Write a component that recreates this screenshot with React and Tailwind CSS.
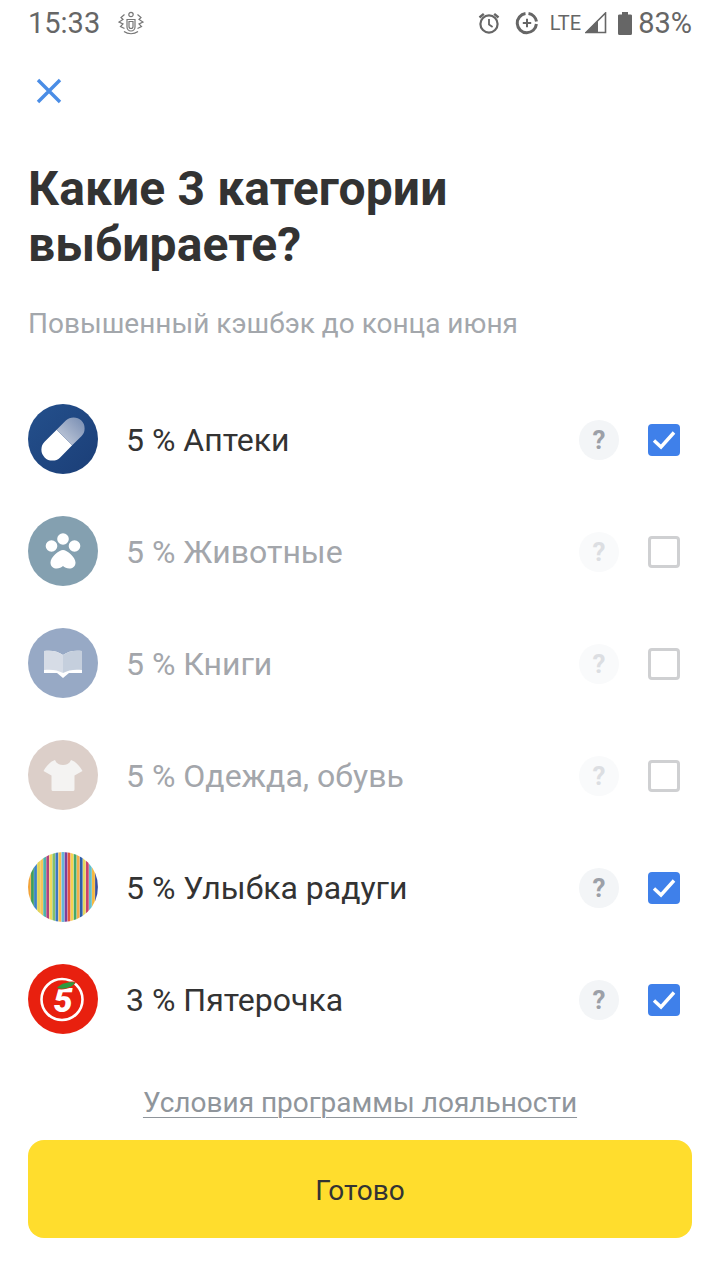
import React from "react";

const font = { fontFamily: "Roboto, sans-serif" };

function Alarm() {
  return (
    <svg width="24" height="24" viewBox="0 0 24 24" fill="none" stroke="#666" strokeWidth="2.2">
      <circle cx="12" cy="13" r="8.6" />
      <path d="M12 8v5.500l3.600 2.400" strokeWidth="1.800" />
      <path d="M2.500 6.500 6.800 2.800M21.500 6.500l-4.300-3.700" strokeWidth="2.400" />
    </svg>
  );
}
function DataSaver() {
  return (
    <svg width="24" height="24" viewBox="0 0 24 24" fill="none" stroke="#666">
      <path d="M10.500 2.600A9.600 9.600 0 1 0 21.400 13" strokeWidth="3" />
      <path d="M13.500 2.600a9.600 9.600 0 0 1 8 8" strokeWidth="3" />
      <path d="M12 7.800v8.400M7.800 12h8.400" strokeWidth="2" />
    </svg>
  );
}
function Signal() {
  return (
    <svg width="22" height="22" viewBox="0 0 22 22">
      <path d="M1 20.500 20.500 1v19.500z" fill="none" stroke="#666" strokeWidth="1.600" />
      <path d="M1 20.500 13 8.500v12z" fill="#666" />
    </svg>
  );
}
function Battery() {
  return (
    <svg width="14" height="23" viewBox="0 0 14 23">
      <path d="M4 0h6v2.400h2.500A1.500 1.500 0 0 1 14 4v17.500a1.500 1.500 0 0 1-1.500 1.500h-11A1.500 1.500 0 0 1 0 21.500V4a1.500 1.500 0 0 1 1.500-1.600H4z" fill="#666" />
    </svg>
  );
}
function Crest() {
  return (
    <svg width="26" height="24" viewBox="0 0 26 24" fill="none" stroke="#777" strokeWidth="1.200">
      <circle cx="13" cy="3.500" r="2.200" />
      <path d="M9 8.500h8v7.500a4 4 0 0 1-8 0z" />
      <path d="M11 10.500h4v5a2 2 0 0 1-4 0z" />
      <path d="M6.500 3.500 3 6.500l2 2-4 2.500 4 2-2.500 2.500 4 2" />
      <path d="M19.500 3.500l3.500 3-2 2 4 2.500-4 2 2.500 2.500-4 2" />
      <path d="M6 20.500c4 3 10 3 14 0" />
    </svg>
  );
}

function Pill() {
  return (
    <svg width="70" height="70" viewBox="0 0 70 70">
      <defs>
        <linearGradient id="pillbg" x1="0" y1="0" x2="1" y2="1">
          <stop offset="0" stopColor="#24508c" />
          <stop offset="1" stopColor="#1b3e77" />
        </linearGradient>
        <linearGradient id="pilltop" x1="0" y1="0" x2="1" y2="0">
          <stop offset="0" stopColor="#b4bfd3" />
          <stop offset="1" stopColor="#7f93b6" />
        </linearGradient>
      </defs>
      <circle cx="35" cy="35" r="35" fill="url(#pillbg)" />
      <g transform="rotate(-45 35 35)">
        <path d="M37 24H20a11 11 0 0 0 0 22h17z" fill="#fff" />
        <path d="M37 24h13a11 11 0 0 1 0 22H37z" fill="url(#pilltop)" />
      </g>
    </svg>
  );
}
function Paw() {
  return (
    <svg width="70" height="70" viewBox="0 0 70 70">
      <circle cx="35" cy="35" r="35" fill="#84a0b0" />
      <g fill="#fff">
        <circle cx="23.500" cy="30" r="5.800" />
        <circle cx="35" cy="23" r="5.800" />
        <circle cx="46.500" cy="30" r="5.800" />
        <path d="M35 34c4 0 12.500 7 12.500 12.500 0 4-3 6-6.200 6-2.500 0-4.800-1-6.300-2.500-1.500 1.500-3.800 2.500-6.300 2.500-3.200 0-6.200-2-6.200-6C22.500 41 31 34 35 34z" />
      </g>
    </svg>
  );
}
function Book() {
  return (
    <svg width="70" height="70" viewBox="0 0 70 70">
      <circle cx="35" cy="35" r="35" fill="#97a9c5" />
      <path d="M16 23c7-1 14 0 19 4 5-4 12-5 19-4v22H41l-6 5-6-5H16z" fill="#fff" />
      <path d="M16 23c7-1 14 0 19 4v18c-5-3-12-4-19-3z" fill="#d6dce6" />
      <path d="M54 23c-7-1-14 0-19 4v18c5-3 12-4 19-3z" fill="#c5cfdd" />
    </svg>
  );
}
function Shirt() {
  return (
    <svg width="70" height="70" viewBox="0 0 70 70">
      <circle cx="35" cy="35" r="35" fill="#dccfc9" />
      <path d="M27 20c1.500 3.500 4 5 8 5s6.500-1.500 8-5c4.500 1.500 8 5 11.500 11l-8 4.500V49.500a1.500 1.500 0 0 1-1.500 1.500H25a1.500 1.500 0 0 1-1.500-1.500V35.500l-8-4.500C19 25 22.500 21.500 27 20z" fill="#f4f3f2" />
    </svg>
  );
}
function Rainbow() {
  const colors = ["#f2a33a", "#3f9d5b", "#3b82c4", "#e0d257", "#f4c65a", "#4fb3a9", "#b2437c", "#f2d95c", "#86c06a", "#3d77c0", "#f6c04d", "#63b7d9", "#7d3f98", "#e5573f", "#f6d24f", "#43a86b", "#f2b04a", "#2f5ea8", "#e7d760", "#c9416b", "#65c0c8", "#f4b63f", "#3a4f9c"];
  return (
    <svg width="70" height="70" viewBox="0 0 70 70">
      <defs>
        <clipPath id="rb"><circle cx="35" cy="35" r="35" /></clipPath>
      </defs>
      <g clipPath="url(#rb)">
        <rect width="70" height="70" fill="#fff" />
        {colors.map((c, i) => (
          <rect key={i} x={i * 3.05} width="2.800" height="70" fill={c} />
        ))}
      </g>
    </svg>
  );
}
function Five() {
  return (
    <svg width="70" height="70" viewBox="0 0 70 70">
      <circle cx="35" cy="35" r="35" fill="#e8200f" />
      <circle cx="34" cy="35.500" r="20.500" fill="none" stroke="#fff" strokeWidth="2.600" />
      <text x="35" y="48" textAnchor="middle" fontFamily="Roboto, sans-serif" fontWeight="900" fontStyle="italic" fontSize="34" fill="#fff">5</text>
      <path d="M27 24.500c3-5 11-8 21-6.500-2.500 6-12 9-21 6.500z" fill="#e8200f" />
      <path d="M29 24c3-4 10-6.500 18-5.500-2 4.500-10 7.500-18 5.500z" fill="#2f9a3e" />
    </svg>
  );
}

function Question({ dim }) {
  return (
    <div className={`flex h-10 w-10 items-center justify-center rounded-full text-[26px] font-bold ${dim ? "bg-[#f9fafb] text-[#dcdee2]" : "bg-[#f3f5f7] text-[#9ca0a8]"}`}>?</div>
  );
}

function Check({ on }) {
  if (on) {
    return (
      <div className="flex h-8 w-8 items-center justify-center rounded-[4px] bg-[#3f80ea]">
        <svg width="26" height="22" viewBox="0 0 26 22" fill="none" stroke="#fff" strokeWidth="3.400">
          <path d="M3 11.500 10 18 23 3.500" />
        </svg>
      </div>
    );
  }
  return <div className="h-8 w-8 rounded-[4px] border-[3px] border-[#cfd0d2]" />;
}

const rows = [
  { icon: <Pill />, label: "5 % Аптеки", on: true },
  { icon: <Paw />, label: "5 % Животные", on: false },
  { icon: <Book />, label: "5 % Книги", on: false },
  { icon: <Shirt />, label: "5 % Одежда, обувь", on: false },
  { icon: <Rainbow />, label: "5 % Улыбка радуги", on: true },
  { icon: <Five />, label: "3 % Пятерочка", on: true },
];

export default function App() {
  return (
    <div className="flex h-[1280px] w-[720px] flex-col overflow-hidden bg-white text-[#333]" style={font}>
      <div className="flex h-[46px] items-center justify-between pl-7 pr-[28px] text-[#666]">
        <div className="flex items-center gap-[18px]">
          <span className="text-[29px] leading-none">15:33</span>
          <Crest />
        </div>
        <div className="flex items-center">
          <Alarm />
          <span className="ml-[14px]"><DataSaver /></span>
          <span className="ml-[11px] text-[20px] leading-none">LTE</span>
          <span className="ml-[4px]"><Signal /></span>
          <span className="ml-[11px]"><Battery /></span>
          <span className="ml-[6px] text-[29px] leading-none">83%</span>
        </div>
      </div>

      <div className="pl-[35px] pt-[31px]">
        <svg width="28" height="28" viewBox="0 0 28 28" fill="none" stroke="#4a8de6" strokeWidth="3.400">
          <path d="M3 3l22 22M25 3 3 25" />
        </svg>
      </div>

      <h1 className="mt-[56px] px-7 text-[48px] leading-[56px] font-bold tracking-[0.12px] text-[#333]">
        Какие 3 категории
        <br />
        выбираете?
      </h1>
      <p className="mt-[33px] px-7 text-[28px] leading-[36px] text-[#a3a7ac]">Повышенный кэшбэк до конца июня</p>

      <div className="mt-[62px] flex flex-col gap-[42px] pl-7 pr-10">
        {rows.map((r) => (
          <div key={r.label} className="flex h-[70px] items-center">
            {r.icon}
            <span className={`ml-[28px] flex-1 pt-[2px] text-[32px] ${r.on ? "text-[#333]" : "text-[#a3a6ab]"}`}>{r.label}</span>
            <div className="pt-[2px]"><Question dim={!r.on} /></div>
            <div className="ml-[29px] pt-[2px]"><Check on={r.on} /></div>
          </div>
        ))}
      </div>

      <a className="mt-[49px] text-center text-[28px] leading-[40px] text-[#8f959b] underline underline-offset-[5px] decoration-1">Условия программы лояльности</a>

      <div className="mt-[17px] px-7">
        <div className="flex h-[98px] items-center justify-center rounded-2xl bg-[#ffdd2d] pt-[3px] text-[28px] text-[#333]">Готово</div>
      </div>
    </div>
  );
}
